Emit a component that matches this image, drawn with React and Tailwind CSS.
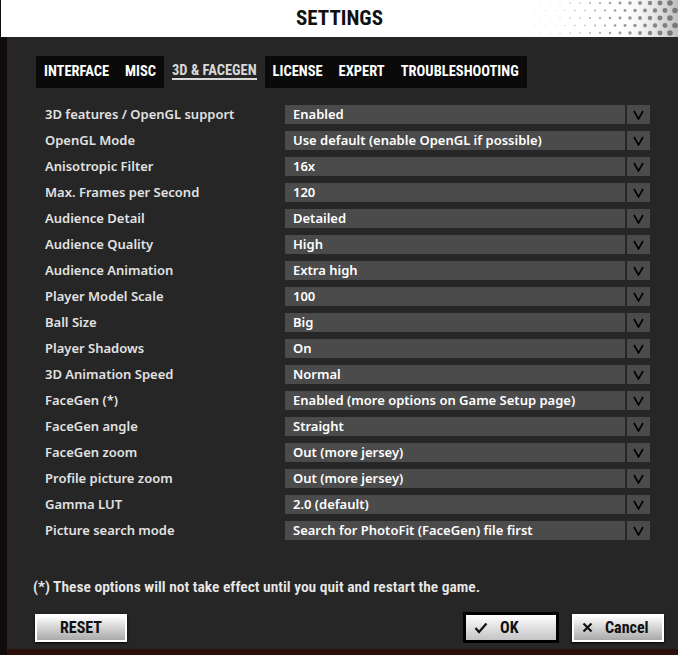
import React from 'react';

const rows = [
  ['3D features / OpenGL support', 'Enabled'],
  ['OpenGL Mode', 'Use default (enable OpenGL if possible)'],
  ['Anisotropic Filter', '16x'],
  ['Max. Frames per Second', '120'],
  ['Audience Detail', 'Detailed'],
  ['Audience Quality', 'High'],
  ['Audience Animation', 'Extra high'],
  ['Player Model Scale', '100'],
  ['Ball Size', 'Big'],
  ['Player Shadows', 'On'],
  ['3D Animation Speed', 'Normal'],
  ['FaceGen (*)', 'Enabled (more options on Game Setup page)'],
  ['FaceGen angle', 'Straight'],
  ['FaceGen zoom', 'Out (more jersey)'],
  ['Profile picture zoom', 'Out (more jersey)'],
  ['Gamma LUT', '2.0 (default)'],
  ['Picture search mode', 'Search for PhotoFit (FaceGen) file first'],
];

const narrow = "font-['Liberation_Sans_Narrow','Roboto_Condensed','DejaVu_Sans_Condensed',sans-serif]";

function Halftone() {
  const dots = [];
  for (let c = 0; c < 16; c++) {
    for (let r = 0; r < 5; r++) {
      const x = c * 10 + (r % 2 ? 5 : 0);
      const t = c / 15;
      const rad = 0.4 + t * t * 2.4;
      dots.push(<circle key={`${c}-${r}`} cx={x} cy={r * 7.5 + 3} r={rad} fill="#6b6b6b" opacity={0.35 + t * 0.5} />);
    }
  }
  return (
    <svg width="158" height="37" className="absolute right-0 top-0">
      <defs>
        <linearGradient id="hg" x1="0" x2="1">
          <stop offset="0.6" stopColor="#fff" stopOpacity="0" />
          <stop offset="1" stopColor="#bdbdbd" />
        </linearGradient>
      </defs>
      <rect width="158" height="37" fill="url(#hg)" />
      {dots}
    </svg>
  );
}

function Chevron() {
  return (
    <svg width="11" height="10" viewBox="0 0 11 10">
      <polyline points="1,1 5.5,9 10,1" fill="none" stroke="#000" strokeWidth="1.6" />
    </svg>
  );
}

export default function App() {
  return (
    <div className="w-[678px] h-[655px] bg-[#0f0c0b] flex flex-col overflow-hidden font-['Noto_Sans',sans-serif]">
      <div className="relative h-[37px] ml-[1px] bg-white flex items-center justify-center">
        <Halftone />
        <span className={`relative text-[21px] font-bold text-[#111] ${narrow}`}>SETTINGS</span>
      </div>
      <div className="ml-[7px] h-[612px] bg-[#262626] flex flex-col">
        <div className={`flex mt-[19px] ml-[29px] h-[32px] text-[14.5px] font-bold text-white ${narrow}`}>
          <div className="flex bg-[#0a0a0a]">
            <span className="px-2 flex items-center">INTERFACE</span>
            <span className="px-2 flex items-center">MISC</span>
          </div>
          <span className="px-2 flex items-center text-[#d8d8d8]">
            <span className="border-b-2 border-[#d8d8d8] leading-[14px]">3D &amp; FACEGEN</span>
          </span>
          <div className="flex bg-[#0a0a0a]">
            <span className="px-2 flex items-center">LICENSE</span>
            <span className="px-2 flex items-center">EXPERT</span>
            <span className="px-2 flex items-center">TROUBLESHOOTING</span>
          </div>
        </div>
        <div className="mt-[17px] ml-[38px] flex flex-col gap-[7px]">
          {rows.map(([label, value]) => (
            <div key={label} className="flex h-[19px] items-center">
              <span className="w-[240px] text-[13px] font-semibold text-[#e2e2e2] leading-none">{label}</span>
              <div className="w-[340px] h-full bg-[#4b4b4b] px-2 flex items-center text-[13px] font-semibold text-white leading-none">{value}</div>
              <div className="ml-[2px] w-[23px] h-full bg-[#4b4b4b] flex items-center justify-center"><Chevron /></div>
            </div>
          ))}
        </div>
        <p className={`mt-[36px] ml-[26px] text-[15.5px] font-semibold text-[#e8e8e8] ${narrow}`}>(*) These options will not take effect until you quit and restart the game.</p>
        <div className={`mt-[13px] ml-[28px] mr-[14px] flex items-center text-[16px] font-bold text-[#111] ${narrow}`}>
          <button className="w-[92px] h-[28px] border-2 border-white bg-gradient-to-b from-white to-[#a9a9a9] shadow-[0_1px_2px_#000]">RESET</button>
          <div className="flex-1" />
          <button className="w-[96px] h-[31px] border-[3px] border-black bg-gradient-to-b from-white to-[#c4c4c4] flex items-center gap-3 pl-2">
            <svg width="14" height="12" viewBox="0 0 14 12"><polyline points="1.5,6 5,10 12.5,1.5" fill="none" stroke="#111" strokeWidth="2.2" /></svg>
            OK
          </button>
          <button className="ml-[13px] w-[92px] h-[28px] border-2 border-white bg-gradient-to-b from-white to-[#a9a9a9] flex items-center gap-3 pl-2 shadow-[0_1px_2px_#000]">
            <svg width="11" height="11" viewBox="0 0 11 11"><path d="M1.5 1.5 9.5 9.5 M9.5 1.5 1.5 9.5" stroke="#111" strokeWidth="2.2" /></svg>
            Cancel
          </button>
        </div>
      </div>
      <div className="ml-[7px] flex-1 bg-[#2a0f0c]" />
    </div>
  );
}
